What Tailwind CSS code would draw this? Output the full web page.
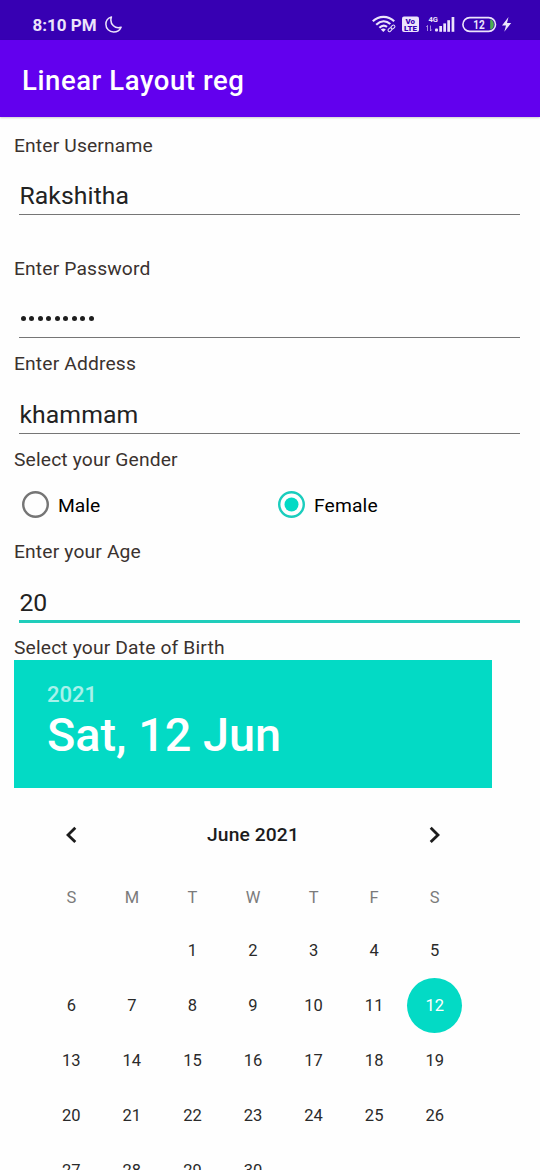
<!DOCTYPE html>
<html lang="en">
<head>
<meta charset="utf-8">
<title>Linear Layout reg</title>
<script src="https://cdn.jsdelivr.net/npm/@tailwindcss/browser@4"></script>
</head>
<body class="bg-white">
<div class="w-[540px] h-[1170px] overflow-hidden flex flex-col bg-[#fefefe] font-[Roboto,sans-serif] text-[19.25px] leading-[26px] text-[#3a322f]">

  <div class="h-10 shrink-0 bg-[#3700b3] flex items-end pl-[32.500px] pr-[23px] pb-[3px] text-[#ece4fb]">
    <span class="text-[17px] leading-[24px] font-bold w-[72px] whitespace-nowrap">8:10 PM</span>
    <svg class="w-[17px] h-[17px] mb-[4px]" viewBox="0 0 17 17" fill="none" stroke="currentColor" stroke-width="1.5" stroke-linejoin="round"><path d="M6.400 .9C2.900 2 .9 5 .9 8.300C.9 12.700 4.300 16 8.600 16C12.100 16 14.900 14.100 16.100 11.200C13.500 12.100 10.500 11.700 8.400 9.700C6 7.500 5.400 4 6.400 .9Z"/></svg>
    <svg class="w-[145px] h-[21px] mb-[4px] ml-auto" viewBox="0 0 145 21" fill="none" stroke="currentColor">
      <g stroke-width="2.200">
        <path d="M.8 9.300C7 3.300 16 3.300 22.200 9.300"/>
        <path d="M4.200 12.700C8.800 8.400 14.300 8.400 18.300 12"/>
        <path d="M7.400 15.800C10 13.200 12.800 13.200 15 14.900"/>
      </g>
      <path d="M8.800 17.400Q11.300 15.500 13.800 17.400L11.300 20Z" fill="currentColor" stroke="none"/>
      <g stroke-width="1"><rect x="-2.200" y="-1.400" width="4.400" height="2.800" rx="1.400" transform="translate(18 17.700) rotate(-42)"/><rect x="-2.200" y="-1.400" width="4.400" height="2.800" rx="1.400" transform="translate(20.900 15) rotate(-42)"/></g>
      <rect x="30" y="4.500" width="17" height="15.500" rx="2" fill="currentColor" stroke="none"/>
      <g fill="#3700b3" stroke="none" font-family="Roboto" font-weight="900">
        <text x="33.500" y="11.500" font-size="7" textLength="9.500" lengthAdjust="spacingAndGlyphs">Vo</text><text x="32" y="18.600" font-size="7.500" textLength="13" lengthAdjust="spacingAndGlyphs">LTE</text>
      </g>
      <text x="56.500" y="10" font-family="Roboto" font-weight="700" font-size="8" fill="currentColor" stroke="none" textLength="9.500" lengthAdjust="spacingAndGlyphs">4G</text>
      <g stroke-width=".8" opacity=".75"><path d="M55.500 19V13.500l-1.200 1.500M58.500 13.500v5.500l1.200-1.500"/></g>
      <g fill="currentColor" stroke="none"><rect x="63" y="16.500" width="3" height="3" rx="1"/><rect x="67.300" y="14" width="2.700" height="5.800"/><rect x="71.300" y="11.400" width="2.700" height="8.400"/><rect x="75.300" y="8.200" width="2.700" height="11.600"/><rect x="79.600" y="5" width="2.700" height="14.800"/></g>
      <rect x="90.900" y="5.600" width="32.600" height="13.800" rx="6.900" stroke-width="1.600"/>
      <path d="M118.200 7.500H119C121.200 8.500 121.800 10.500 121.800 12.500S121.200 16.500 119 17.500H118.200Z" fill="#4caf50" stroke="none"/>
      <text x="101.300" y="16.900" font-family="Roboto" font-weight="700" font-size="12.500" fill="currentColor" stroke="none" textLength="11.500" lengthAdjust="spacingAndGlyphs">12</text>
      <path d="M136.500 5L130 13.500H134L132.300 19.800L139.200 11H135Z" fill="currentColor" stroke="none"/>
    </svg>
  </div>

  <header class="h-[77px] shrink-0 bg-[#6200ee] flex items-center pl-[22px] pt-[5px] text-white text-[27.500px] leading-[32px] font-medium tracking-[0.57px] shadow-[0_1px_2px_rgba(0,0,0,0.2)]">
    <h1 class="whitespace-nowrap">Linear Layout reg</h1>
  </header>

  <main class="flex flex-col pt-[16px] px-[14px]">
    <label class="tracking-[0.15px]">Enter Username</label>
    <div class="mt-[18px] ml-[5.400px] mr-[5.600px] h-[38px] border-b border-[#767676] text-[24.750px] leading-[38px] tracking-[0.1px] text-[#222]">Rakshitha</div>

    <label class="mt-[41px] tracking-[0.15px]">Enter Password</label>
    <div class="mt-[18px] ml-[5.400px] mr-[5.600px] pl-[1.500px] h-[38px] border-b border-[#767676] flex items-center gap-[3.500px]">
      <i class="size-[5px] rounded-full bg-[#1e1e1e]"></i><i class="size-[5px] rounded-full bg-[#1e1e1e]"></i><i class="size-[5px] rounded-full bg-[#1e1e1e]"></i><i class="size-[5px] rounded-full bg-[#1e1e1e]"></i><i class="size-[5px] rounded-full bg-[#1e1e1e]"></i><i class="size-[5px] rounded-full bg-[#1e1e1e]"></i><i class="size-[5px] rounded-full bg-[#1e1e1e]"></i><i class="size-[5px] rounded-full bg-[#1e1e1e]"></i><i class="size-[5px] rounded-full bg-[#1e1e1e]"></i>
    </div>

    <label class="mt-[13px] tracking-[0.15px]">Enter Address</label>
    <div class="mt-[19px] ml-[5.400px] mr-[5.600px] h-[38px] border-b border-[#767676] text-[24.750px] leading-[38px] tracking-[0.1px] text-[#222]">khammam</div>

    <label class="mt-[13px] tracking-[0.15px]">Select your Gender</label>
    <div class="mt-[9px] h-[44px] grid grid-cols-[256px_1fr] items-center pl-2 text-black">
      <div class="flex items-center gap-[9px]">
        <svg class="size-[27px]" viewBox="0 0 27 27"><circle cx="13.500" cy="13.500" r="12.300" fill="none" stroke="#757575" stroke-width="2.400"/></svg>
        <span class="pt-[3px]">Male</span>
      </div>
      <div class="flex items-center gap-[9px]">
        <svg class="size-[27px]" viewBox="0 0 27 27"><circle cx="13.500" cy="13.500" r="12.300" fill="none" stroke="#1acdbd" stroke-width="2.400"/><circle cx="13.500" cy="13.500" r="7" fill="#03dac5"/></svg>
        <span class="pt-[3px] tracking-[0.15px]">Female</span>
      </div>
    </div>

    <label class="mt-[13px] tracking-[0.15px]">Enter your Age</label>
    <div class="mt-[19px] ml-[5.400px] mr-[5.600px] h-[39px] border-b-[3px] border-[#20cdbb] text-[24.750px] leading-[38px] text-[#222]">20</div>

    <label class="mt-[11.500px] tracking-[0.15px]">Select your Date of Birth</label>

    <section class="w-[478.400px] -mt-[1px]">
      <div class="h-[128px] bg-[#03dac5] pl-[33px] pt-[22px] font-medium text-white">
        <div class="text-[22px] leading-[26px] text-white/65">2021</div>
        <div class="text-[46.750px] leading-[55px]">Sat, 12 Jun</div>
      </div>

      <div class="ml-[27px] w-[424px]">
        <div class="h-[94px] flex items-center justify-between px-[24px] text-[#1c1c1c]">
          <svg class="w-[12px] h-[18px]" viewBox="0 0 12 18" fill="none" stroke="currentColor" stroke-width="2.800"><path d="M10.300 1.700L3 8.900L10.300 16.100"/></svg>
          <span class="font-medium tracking-[0.1px]">June 2021</span>
          <svg class="w-[12px] h-[18px]" viewBox="0 0 12 18" fill="none" stroke="currentColor" stroke-width="2.800"><path d="M1.700 1.700L9 8.900L1.700 16.100"/></svg>
        </div>
        <div class="grid grid-cols-7 h-[41px] items-end pb-[15px] text-center text-[16.500px] leading-[20px] text-[#7b7b7b]">
          <span>S</span><span>M</span><span>T</span><span>W</span><span>T</span><span>F</span><span>S</span>
        </div>
        <div class="grid grid-cols-7 auto-rows-[55px] items-center justify-items-center text-[16.500px] text-[#2a2a2a]">
          <span class="col-start-3 pt-[1px]">1</span><span class="pt-[1px]">2</span><span class="pt-[1px]">3</span><span class="pt-[1px]">4</span><span class="pt-[1px]">5</span>
          <span class="pt-[1px]">6</span><span class="pt-[1px]">7</span><span class="pt-[1px]">8</span><span class="pt-[1px]">9</span><span class="pt-[1px]">10</span><span class="pt-[1px]">11</span><span class="size-[55px] rounded-full bg-[#03dac5] text-white leading-[55px] text-center">12</span>
          <span class="pt-[1px]">13</span><span class="pt-[1px]">14</span><span class="pt-[1px]">15</span><span class="pt-[1px]">16</span><span class="pt-[1px]">17</span><span class="pt-[1px]">18</span><span class="pt-[1px]">19</span>
          <span class="pt-[1px]">20</span><span class="pt-[1px]">21</span><span class="pt-[1px]">22</span><span class="pt-[1px]">23</span><span class="pt-[1px]">24</span><span class="pt-[1px]">25</span><span class="pt-[1px]">26</span>
          <span class="pt-[1px]">27</span><span class="pt-[1px]">28</span><span class="pt-[1px]">29</span><span class="pt-[1px]">30</span>
        </div>
      </div>
    </section>
  </main>
</div>
</body>
</html>
